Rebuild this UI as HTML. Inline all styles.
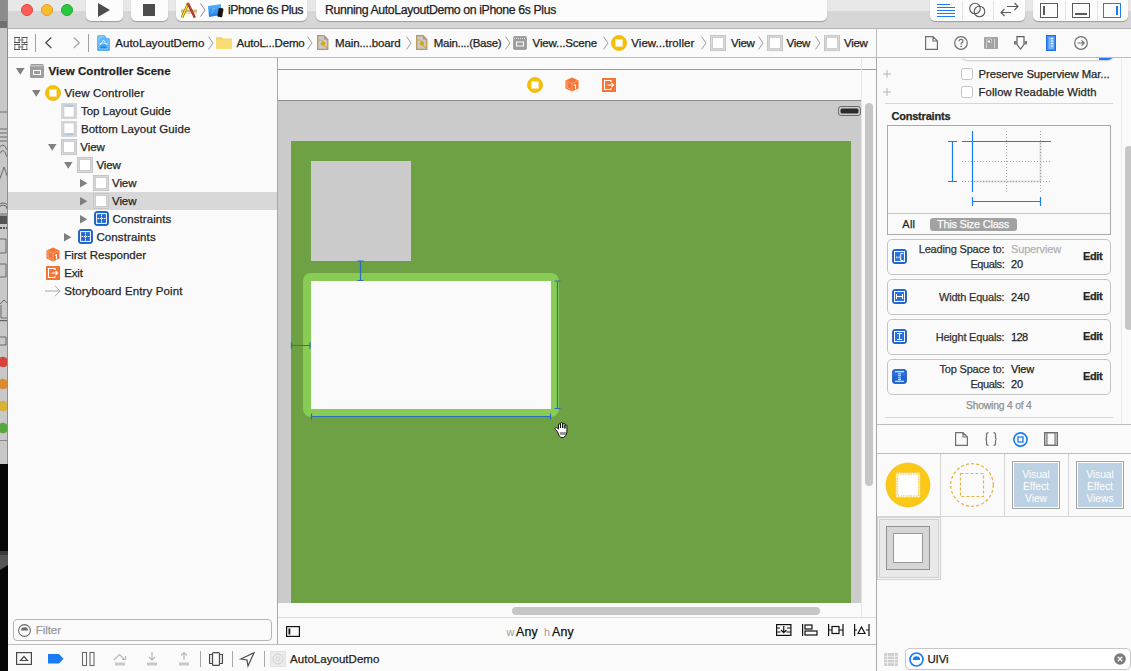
<!DOCTYPE html>
<html><head><meta charset="utf-8">
<style>
*{margin:0;padding:0;box-sizing:border-box}
html,body{width:1131px;height:671px;overflow:hidden;background:#fafafa;font-family:"Liberation Sans",sans-serif;color:#262626}
.a{position:absolute}
.t{position:absolute;white-space:nowrap;line-height:1;-webkit-text-stroke:0.25px currentColor}
svg{position:absolute;overflow:visible}
</style></head><body>
<div class="a" style="left:0px;top:0px;width:8px;height:21px;background:#8c8c8c;"></div>
<div class="a" style="left:0px;top:21px;width:8px;height:7px;background:#6f6f6f;"></div>
<div class="a" style="left:0px;top:28px;width:8px;height:436px;background:#c8c8c8;"></div>
<div class="a" style="left:0px;top:464px;width:8px;height:207px;background:#070707;"></div>
<svg style="left:0px;top:551px;" width="8" height="19" viewBox="0 0 8 19"><path d="M0 0 H8 V14 L0 19 Z" fill="#555"/><path d="M0 0 H8 V4 H0 Z" fill="#3a3a3a"/></svg>
<div class="a" style="left:0;top:0;width:7px;height:464px;overflow:hidden"><svg style="left:0px;top:0px;" width="7" height="464" viewBox="0 0 7 464"><g fill="none" stroke="#6a6a6a" stroke-width="1">
  <path d="M-2 112 H7 M-2 150 Q3 140 7 150" />
  <path d="M0 129 H7 M0 133 H7 M0 137 H7 M0 141 H7"/>
  <path d="M-2 157 Q3 144 7 157"/>
  <path d="M-1 181 L4 167 L9 181"/>
  <path d="M-3 209 A6 6 0 0 1 9 209 M-1 209 A4 4 0 0 1 7 209"/>
  <path d="M0 239 H6 V253 H0 M0 264 H6 V277 H0"/>
  <path d="M-1 305 L4 300 L9 305 M1 305 V318 H7"/><path d="M-1 337 H6 V345 H-1"/>
  </g>
  <rect x="0" y="213" width="7" height="3" fill="#9a9a9a"/><rect x="0" y="216" width="7" height="8" fill="#555"/><path d="M0 228 H7" stroke="#555" stroke-width="2" stroke-dasharray="2 1"/>
  <rect x="0" y="320" width="7" height="1.2" fill="#666"/>
  <circle cx="3" cy="362" r="5.2" fill="#d6433b"/><circle cx="3" cy="384" r="5.2" fill="#dd8a2f"/>
  <circle cx="3" cy="406" r="5.2" fill="#d8b231"/><circle cx="3" cy="428" r="5.2" fill="#56a63c"/>
  <rect x="0" y="440" width="7" height="1" fill="#8a8a8a"/></svg>
</div><div class="a" style="left:7px;top:0px;width:1px;height:464px;background:#8e8e8e;"></div>
<div class="a" style="left:8px;top:0px;width:1123px;height:11px;background:#e8e8e8;"></div>
<div class="a" style="left:8px;top:11px;width:1123px;height:17px;background:#d6d6d6;"></div>
<div class="a" style="left:8px;top:28px;width:1123px;height:1px;background:#b3b3b3;"></div>
<div class="a" style="left:21px;top:4px;width:12px;height:12px;background:#fd5f57;border-radius:50%;border:0.5px solid #e3463f"></div>
<div class="a" style="left:41px;top:4px;width:12px;height:12px;background:#fbbd2e;border-radius:50%;border:0.5px solid #dfa123"></div>
<div class="a" style="left:61px;top:4px;width:12px;height:12px;background:#28c83f;border-radius:50%;border:0.5px solid #1dad2b"></div>
<div class="a" style="left:86px;top:-5px;width:37px;height:26px;background:#fcfcfc;border-radius:5px;box-shadow:0 0.5px 1px rgba(0,0,0,.28)"></div>
<svg style="left:98px;top:3px;" width="13" height="15" viewBox="0 0 13 15"><path d="M0 0 L12 7 L0 14 Z" fill="#4d4d4d"/></svg>
<div class="a" style="left:131px;top:-5px;width:37px;height:26px;background:#fcfcfc;border-radius:5px;box-shadow:0 0.5px 1px rgba(0,0,0,.28)"></div>
<div class="a" style="left:143px;top:4px;width:12px;height:12px;background:#4d4d4d;"></div>
<div class="a" style="left:176px;top:-5px;width:131px;height:26px;background:#fcfcfc;border-radius:5px;box-shadow:0 0.5px 1px rgba(0,0,0,.28)"></div>
<svg style="left:181px;top:2px;" width="17" height="16" viewBox="0 0 17 16"><rect x="0" y="7.5" width="16" height="2.5" fill="#e4b07a"/><rect x="0" y="10" width="16" height="2" fill="#f1d6b4"/><path d="M7.2 1.5 L1 15.5" stroke="#8a6a00" stroke-width="2.6"/><path d="M7.2 1.5 L1 15.5" stroke="#f3dc1a" stroke-width="1.5"/><path d="M7 1.5 L13.8 15.5" stroke="#7a2a1a" stroke-width="2.3"/><path d="M7 1.5 L13.8 15.5" stroke="#c9432e" stroke-width="1.3"/><circle cx="7" cy="2" r="1.4" fill="#d04a3a"/></svg>
<svg style="left:200px;top:3px;" width="6" height="15" viewBox="0 0 6 15"><path d="M0.5 0.5 L5 7 L0.5 13.5" fill="none" stroke="#8c8c8c" stroke-width="1"/></svg>
<svg style="left:208px;top:4px;" width="16" height="14" viewBox="0 0 16 14"><defs><linearGradient id="sg" x1="0" y1="0" x2="0" y2="1"><stop offset="0" stop-color="#5ab4ff"/><stop offset="1" stop-color="#1f7ee6"/></linearGradient></defs><path d="M0 2 L13 0 L13 11 L1 13 Z" fill="url(#sg)"/><path d="M4 6 L7 4 M3 9 L6 7" stroke="#9fd2ff" stroke-width="0.6"/><rect x="10" y="4" width="5" height="9" rx="1.2" fill="#161616" transform="rotate(10 12 8)"/></svg>
<div class="t" style="left:228.00px;top:4.00px;font-size:12.3px;color:#1e1e1e;letter-spacing:-0.504px">iPhone 6s Plus</div>
<div class="a" style="left:316px;top:-5px;width:511px;height:26px;background:#fcfcfc;border-radius:5px;box-shadow:0 0.5px 1px rgba(0,0,0,.28)"></div>
<div class="t" style="left:325.00px;top:4.00px;font-size:12.3px;color:#1e1e1e;letter-spacing:-0.379px">Running AutoLayoutDemo on iPhone 6s Plus</div>
<div class="a" style="left:930px;top:-5px;width:95px;height:26px;background:#fcfcfc;border-radius:5px;box-shadow:0 0.5px 1px rgba(0,0,0,.28)"></div>
<div class="a" style="left:962px;top:1px;width:1px;height:19px;background:#e2e2e2;"></div>
<div class="a" style="left:993px;top:1px;width:1px;height:19px;background:#e2e2e2;"></div>
<div class="a" style="left:1033px;top:-5px;width:95px;height:26px;background:#fcfcfc;border-radius:5px;box-shadow:0 0.5px 1px rgba(0,0,0,.28)"></div>
<div class="a" style="left:1065px;top:1px;width:1px;height:19px;background:#e2e2e2;"></div>
<div class="a" style="left:1097px;top:1px;width:1px;height:19px;background:#e2e2e2;"></div>
<svg style="left:937px;top:4px;" width="19" height="14" viewBox="0 0 19 14"><g stroke="#1b7cf5" stroke-width="1.2"><path d="M0 0.5H13M0 3.5H18M0 6.5H18M0 9.5H18M0 12.5H18"/></g></svg>
<svg style="left:969px;top:2px;" width="18" height="16" viewBox="0 0 18 16"><g fill="none" stroke="#5a5a5a" stroke-width="1.1"><circle cx="6" cy="6.5" r="5.3"/><circle cx="10.5" cy="9.5" r="5.3"/></g></svg>
<svg style="left:1000px;top:3px;" width="20" height="14" viewBox="0 0 20 14"><g fill="none" stroke="#5a5a5a" stroke-width="1.1"><path d="M1 9.5H11M4.5 6 L1 9.5 L4.5 13"/><path d="M7 3.5H18M14.5 0 L18 3.5 L14.5 7"/></g></svg>
<svg style="left:1040px;top:3px;" width="18" height="15" viewBox="0 0 18 15"><rect x="0.5" y="0.5" width="17" height="14" fill="none" stroke="#5a5a5a"/><rect x="3" y="3" width="2" height="9" fill="#5a5a5a"/></svg>
<svg style="left:1072px;top:3px;" width="18" height="15" viewBox="0 0 18 15"><rect x="0.5" y="0.5" width="17" height="14" fill="none" stroke="#5a5a5a"/><rect x="3" y="10" width="12" height="2" fill="#5a5a5a"/></svg>
<svg style="left:1103px;top:3px;" width="18" height="15" viewBox="0 0 18 15"><rect x="0.5" y="0.5" width="17" height="14" fill="none" stroke="#1b7cf5"/><rect x="13" y="3" width="2" height="9" fill="#1b7cf5"/></svg>
<div class="a" style="left:8px;top:29px;width:1123px;height:28px;background:#fafafa;"></div>
<div class="a" style="left:8px;top:57px;width:1123px;height:1px;background:#bdbdbd;"></div>
<div class="a" style="left:876px;top:29px;width:1px;height:28px;background:#bdbdbd;"></div>
<svg style="left:14px;top:37px;" width="14" height="13" viewBox="0 0 14 13"><rect x="0" y="0" width="6" height="6" fill="#fff"/><rect x="0" y="0" width="1.6" height="6" fill="#ababab"/><rect x="4.4" y="0" width="1.6" height="6" fill="#ababab"/><path d="M0 0.5 H6 M0 5.5 H6" stroke="#555" stroke-width="1"/><rect x="7.5" y="0" width="6" height="6" fill="#fff"/><rect x="7.5" y="0" width="1.6" height="6" fill="#ababab"/><rect x="11.9" y="0" width="1.6" height="6" fill="#ababab"/><path d="M7.5 0.5 H13.5 M7.5 5.5 H13.5" stroke="#555" stroke-width="1"/><rect x="0" y="7" width="6" height="6" fill="#fff"/><rect x="0" y="7" width="1.6" height="6" fill="#ababab"/><rect x="4.4" y="7" width="1.6" height="6" fill="#ababab"/><path d="M0 7.5 H6 M0 12.5 H6" stroke="#555" stroke-width="1"/><rect x="7.5" y="7" width="6" height="6" fill="#fff"/><rect x="7.5" y="7" width="1.6" height="6" fill="#ababab"/><rect x="11.9" y="7" width="1.6" height="6" fill="#ababab"/><path d="M7.5 7.5 H13.5 M7.5 12.5 H13.5" stroke="#555" stroke-width="1"/><path d="M4 3 H9.5 M4 10 H9.5" stroke="#666" stroke-width="1"/><path d="M10.5 5.8 V7.5" stroke="#888" stroke-width="0.8"/></svg>
<div class="a" style="left:35px;top:34px;width:1px;height:18px;background:#a0a0a0;"></div>
<svg style="left:45px;top:37px;" width="7" height="12" viewBox="0 0 7 12"><path d="M6.3 0.5 L0.8 5.75 L6.3 11" fill="none" stroke="#4a4a4a" stroke-width="1.3"/></svg>
<svg style="left:73px;top:37px;" width="7" height="12" viewBox="0 0 7 12"><path d="M0.7 0.5 L6.2 5.75 L0.7 11" fill="none" stroke="#a6a6a6" stroke-width="1.3"/></svg>
<div class="a" style="left:88px;top:34px;width:1px;height:18px;background:#a0a0a0;"></div>
<svg style="left:97px;top:35px;" width="13" height="16" viewBox="0 0 13 16"><defs><linearGradient id="pg" x1="0" y1="0" x2="0" y2="1"><stop offset="0" stop-color="#6cc0f7"/><stop offset="1" stop-color="#3a9cf0"/></linearGradient></defs><path d="M0.5 1.5 Q0.5 0.5 1.5 0.5 H7.5 L9.5 3.5 H11.5 Q12.5 3.5 12.5 4.5 V15 Q12.5 15.5 12 15.5 H1 Q0.5 15.5 0.5 15 Z" fill="url(#pg)" stroke="#59aef0" stroke-width="0.8"/><path d="M2 14 V2 H7 M2 14 H11 V5" fill="none" stroke="#b5e0ff" stroke-width="0.6"/><path d="M2.5 13 Q6.5 9.5 10.5 13 Z" fill="#1f86ee"/><path d="M3 10 L6.5 5 L10 10 M2.5 9 Q6.5 7 10.5 9" fill="none" stroke="#e8f6ff" stroke-width="0.9"/></svg>
<div class="t" style="left:115.30px;top:38.00px;font-size:11.5px;color:#222;letter-spacing:0.010px">AutoLayoutDemo</div>
<svg style="left:208px;top:36px;" width="6" height="14" viewBox="0 0 6 14"><path d="M0.5 0.5 L5 7 L0.5 13.5" fill="none" stroke="#a0a0a0" stroke-width="1"/></svg>
<svg style="left:216px;top:37px;" width="16" height="12" viewBox="0 0 16 12"><path d="M0 1 Q0 0 1 0 H5.5 L7 1.5 H15 Q16 1.5 16 2.5 V11 Q16 12 15 12 H1 Q0 12 0 11 Z" fill="#f6d66a"/><rect x="0" y="3" width="16" height="9" rx="1" fill="#f9dc74"/></svg>
<div class="t" style="left:236.50px;top:38.00px;font-size:11.5px;color:#222;letter-spacing:-0.193px">AutoL...Demo</div>
<svg style="left:307px;top:36px;" width="6" height="14" viewBox="0 0 6 14"><path d="M0.5 0.5 L5 7 L0.5 13.5" fill="none" stroke="#a0a0a0" stroke-width="1"/></svg>
<svg style="left:317px;top:35px;" width="12" height="16" viewBox="0 0 12 16"><path d="M0.7 0.7 H7 L10.8 4.5 V14.3 H0.7 Z" fill="#c9c9c9" stroke="#b7975a" stroke-width="1.3"/><path d="M7 0.7 L10.8 4.5 H7 Z" fill="#9a9a9a"/><path d="M1 5 H4.5 L6 7" fill="none" stroke="#c9a24a" stroke-width="0.8"/><circle cx="6" cy="8.5" r="2.2" fill="#d9a514"/><path d="M7 11 L10 12.5" stroke="#d9a514" stroke-width="1"/></svg>
<div class="t" style="left:335.00px;top:38.00px;font-size:11.5px;color:#222;letter-spacing:-0.125px">Main....board</div>
<svg style="left:406px;top:36px;" width="6" height="14" viewBox="0 0 6 14"><path d="M0.5 0.5 L5 7 L0.5 13.5" fill="none" stroke="#a0a0a0" stroke-width="1"/></svg>
<svg style="left:416px;top:35px;" width="12" height="16" viewBox="0 0 12 16"><path d="M0.7 0.7 H7 L10.8 4.5 V14.3 H0.7 Z" fill="#c9c9c9" stroke="#b7975a" stroke-width="1.3"/><path d="M7 0.7 L10.8 4.5 H7 Z" fill="#9a9a9a"/><path d="M1 5 H4.5 L6 7" fill="none" stroke="#c9a24a" stroke-width="0.8"/><circle cx="6" cy="8.5" r="2.2" fill="#d9a514"/><path d="M7 11 L10 12.5" stroke="#d9a514" stroke-width="1"/></svg>
<div class="t" style="left:433.80px;top:38.00px;font-size:11.5px;color:#222;letter-spacing:-0.291px">Main....(Base)</div>
<svg style="left:505px;top:36px;" width="6" height="14" viewBox="0 0 6 14"><path d="M0.5 0.5 L5 7 L0.5 13.5" fill="none" stroke="#a0a0a0" stroke-width="1"/></svg>
<svg style="left:513px;top:36px;" width="14" height="14" viewBox="0 0 14 14"><rect x="0.5" y="0.5" width="13" height="13" rx="1.2" fill="#9c9c9c" stroke="#8a8a8a" stroke-width="0.6"/><path d="M1 2.5 H13" stroke="#dcdcdc" stroke-width="1.2" stroke-dasharray="1 1"/><rect x="3.5" y="6" width="7" height="4" fill="none" stroke="#fff" stroke-width="1"/></svg>
<div class="t" style="left:532.60px;top:38.00px;font-size:11.5px;color:#222;letter-spacing:-0.148px">View...Scene</div>
<svg style="left:603px;top:36px;" width="6" height="14" viewBox="0 0 6 14"><path d="M0.5 0.5 L5 7 L0.5 13.5" fill="none" stroke="#a0a0a0" stroke-width="1"/></svg>
<svg style="left:611px;top:35px;" width="16" height="16" viewBox="0 0 16 16"><circle cx="8" cy="8" r="7.6" fill="#f6c001" stroke="#e0ad00" stroke-width="0.6"/><rect x="4.3" y="4.3" width="7.4" height="7.4" fill="#fff" stroke="#f3d36a" stroke-width="0.8" stroke-dasharray="1 0.8"/></svg>
<div class="t" style="left:631.30px;top:38.00px;font-size:11.5px;color:#222;letter-spacing:0.041px">View...troller</div>
<svg style="left:701px;top:36px;" width="6" height="14" viewBox="0 0 6 14"><path d="M0.5 0.5 L5 7 L0.5 13.5" fill="none" stroke="#a0a0a0" stroke-width="1"/></svg>
<svg style="left:710px;top:35px;" width="16" height="16" viewBox="0 0 16 16"><rect x="0.5" y="0.5" width="15" height="15" fill="#d9d9d9" stroke="#c6c6c6" stroke-width="1"/><rect x="2.5" y="2.5" width="11" height="11" fill="#fff" stroke="#c4c4c4" stroke-width="0.8"/></svg>
<div class="t" style="left:731.00px;top:38.00px;font-size:11.5px;color:#222;letter-spacing:-0.305px">View</div>
<svg style="left:758px;top:36px;" width="6" height="14" viewBox="0 0 6 14"><path d="M0.5 0.5 L5 7 L0.5 13.5" fill="none" stroke="#a0a0a0" stroke-width="1"/></svg>
<svg style="left:767px;top:35px;" width="16" height="16" viewBox="0 0 16 16"><rect x="0.5" y="0.5" width="15" height="15" fill="#d9d9d9" stroke="#c6c6c6" stroke-width="1"/><rect x="2.5" y="2.5" width="11" height="11" fill="#fff" stroke="#c4c4c4" stroke-width="0.8"/></svg>
<div class="t" style="left:786.60px;top:38.00px;font-size:11.5px;color:#222;letter-spacing:-0.305px">View</div>
<svg style="left:815px;top:36px;" width="6" height="14" viewBox="0 0 6 14"><path d="M0.5 0.5 L5 7 L0.5 13.5" fill="none" stroke="#a0a0a0" stroke-width="1"/></svg>
<svg style="left:824px;top:35px;" width="16" height="16" viewBox="0 0 16 16"><rect x="0.5" y="0.5" width="15" height="15" fill="#d9d9d9" stroke="#c6c6c6" stroke-width="1"/><rect x="2.5" y="2.5" width="11" height="11" fill="#fff" stroke="#c4c4c4" stroke-width="0.8"/></svg>
<div class="t" style="left:844.00px;top:38.00px;font-size:11.5px;color:#222;letter-spacing:-0.305px">View</div>
<div class="a" style="left:277px;top:58px;width:1px;height:586px;background:#a8a8a8;"></div>
<div class="a" style="left:8px;top:192px;width:269px;height:18px;background:#d8d8d8;"></div>
<svg style="left:15.5px;top:68px;" width="9" height="7" viewBox="0 0 9 7"><path d="M0 0 H8.5 L4.25 6.8 Z" fill="#808080"/></svg>
<svg style="left:30px;top:64px;" width="14" height="14" viewBox="0 0 14 14"><rect x="0" y="0" width="14" height="14" rx="1.5" fill="#9d9d9d"/><path d="M0.5 1.5 H13.5" stroke="#e0e0e0" stroke-width="1" stroke-dasharray="1 1"/><path d="M0.5 2.5 H13.5" stroke="#c8c8c8" stroke-width="1" stroke-dasharray="1 1" stroke-dashoffset="1"/><rect x="3.5" y="6.5" width="7" height="4" fill="none" stroke="#fff" stroke-width="1"/></svg>
<div class="t" style="left:48.60px;top:66.00px;font-size:11.5px;color:#262626;letter-spacing:0.037px;font-weight:bold">View Controller Scene</div>
<svg style="left:32px;top:90px;" width="9" height="7" viewBox="0 0 9 7"><path d="M0 0 H8.5 L4.25 6.8 Z" fill="#808080"/></svg>
<svg style="left:45px;top:85px;" width="16" height="16" viewBox="0 0 16 16"><circle cx="8" cy="8" r="7.6" fill="#f6c001" stroke="#e0ad00" stroke-width="0.6"/><rect x="4.3" y="4.3" width="7.4" height="7.4" fill="#fff" stroke="#f3d36a" stroke-width="0.8" stroke-dasharray="1 0.8"/></svg>
<div class="t" style="left:64.40px;top:88.00px;font-size:11.5px;color:#262626;letter-spacing:0.149px">View Controller</div>
<svg style="left:61px;top:103px;" width="16" height="16" viewBox="0 0 16 16"><rect x="0" y="0" width="16" height="16" fill="#d5d5d5"/><rect x="3" y="2" width="10" height="12" fill="#fff" stroke="#c9c9c9" stroke-width="0.6"/><path d="M3.5 3 H12.5" stroke="#5b8fd9" stroke-width="0.9"/></svg>
<div class="t" style="left:80.90px;top:106.00px;font-size:11.5px;color:#262626;letter-spacing:-0.009px">Top Layout Guide</div>
<svg style="left:61px;top:121px;" width="16" height="16" viewBox="0 0 16 16"><rect x="0" y="0" width="16" height="16" fill="#d5d5d5"/><rect x="3" y="2" width="10" height="12" fill="#fff" stroke="#c9c9c9" stroke-width="0.6"/><path d="M3.5 13 H12.5" stroke="#5b8fd9" stroke-width="0.9"/></svg>
<div class="t" style="left:80.90px;top:124.00px;font-size:11.5px;color:#262626;letter-spacing:0.077px">Bottom Layout Guide</div>
<svg style="left:47.8px;top:143.5px;" width="9" height="7" viewBox="0 0 9 7"><path d="M0 0 H8.5 L4.25 6.8 Z" fill="#808080"/></svg>
<svg style="left:61px;top:139px;" width="16" height="16" viewBox="0 0 16 16"><rect x="0.5" y="0.5" width="15" height="15" fill="#d9d9d9" stroke="#c6c6c6" stroke-width="1"/><rect x="2.5" y="2.5" width="11" height="11" fill="#fff" stroke="#c4c4c4" stroke-width="0.8"/></svg>
<div class="t" style="left:80.30px;top:142.00px;font-size:11.5px;color:#262626;letter-spacing:-0.080px">View</div>
<svg style="left:63.9px;top:161.5px;" width="9" height="7" viewBox="0 0 9 7"><path d="M0 0 H8.5 L4.25 6.8 Z" fill="#808080"/></svg>
<svg style="left:77px;top:157px;" width="16" height="16" viewBox="0 0 16 16"><rect x="0.5" y="0.5" width="15" height="15" fill="#d9d9d9" stroke="#c6c6c6" stroke-width="1"/><rect x="2.5" y="2.5" width="11" height="11" fill="#fff" stroke="#c4c4c4" stroke-width="0.8"/></svg>
<div class="t" style="left:96.40px;top:160.00px;font-size:11.5px;color:#262626;letter-spacing:-0.080px">View</div>
<svg style="left:80.3px;top:179px;" width="8" height="9" viewBox="0 0 8 9"><path d="M0 0 V8.5 L7.4 4.25 Z" fill="#808080"/></svg>
<svg style="left:93px;top:175px;" width="16" height="16" viewBox="0 0 16 16"><rect x="0.5" y="0.5" width="15" height="15" fill="#d9d9d9" stroke="#c6c6c6" stroke-width="1"/><rect x="2.5" y="2.5" width="11" height="11" fill="#fff" stroke="#c4c4c4" stroke-width="0.8"/></svg>
<div class="t" style="left:112.00px;top:178.00px;font-size:11.5px;color:#262626;letter-spacing:-0.080px">View</div>
<svg style="left:80.3px;top:197px;" width="8" height="9" viewBox="0 0 8 9"><path d="M0 0 V8.5 L7.4 4.25 Z" fill="#808080"/></svg>
<svg style="left:93px;top:193px;" width="16" height="16" viewBox="0 0 16 16"><rect x="0.5" y="0.5" width="15" height="15" fill="#d9d9d9" stroke="#c6c6c6" stroke-width="1"/><rect x="2.5" y="2.5" width="11" height="11" fill="#fff" stroke="#c4c4c4" stroke-width="0.8"/></svg>
<div class="t" style="left:112.00px;top:196.00px;font-size:11.5px;color:#262626;letter-spacing:-0.080px">View</div>
<svg style="left:80.3px;top:215px;" width="8" height="9" viewBox="0 0 8 9"><path d="M0 0 V8.5 L7.4 4.25 Z" fill="#808080"/></svg>
<svg style="left:94px;top:211px;" width="15" height="15" viewBox="0 0 15 15"><rect x="0.5" y="0.5" width="14" height="14" rx="2.5" fill="#1b63cc" stroke="#1558bb" stroke-width="0.8"/><rect x="2.6" y="2.6" width="9.8" height="9.8" fill="#1f6ad6" stroke="#fff" stroke-width="1"/><path d="M7.5 3.5 V11.5 M3.5 7.5 H11.5" stroke="#fff" stroke-width="1" stroke-dasharray="1.5 0.7"/></svg>
<div class="t" style="left:112.40px;top:214.00px;font-size:11.5px;color:#262626;letter-spacing:0.076px">Constraints</div>
<svg style="left:64.4px;top:233px;" width="8" height="9" viewBox="0 0 8 9"><path d="M0 0 V8.5 L7.4 4.25 Z" fill="#808080"/></svg>
<svg style="left:78px;top:229px;" width="15" height="15" viewBox="0 0 15 15"><rect x="0.5" y="0.5" width="14" height="14" rx="2.5" fill="#1b63cc" stroke="#1558bb" stroke-width="0.8"/><rect x="2.6" y="2.6" width="9.8" height="9.8" fill="#1f6ad6" stroke="#fff" stroke-width="1"/><path d="M7.5 3.5 V11.5 M3.5 7.5 H11.5" stroke="#fff" stroke-width="1" stroke-dasharray="1.5 0.7"/></svg>
<div class="t" style="left:96.40px;top:232.00px;font-size:11.5px;color:#262626;letter-spacing:0.112px">Constraints</div>
<svg style="left:46px;top:247px;" width="14" height="15" viewBox="0 0 14 15"><path d="M7 0.5 L13.5 3.5 V11.5 L7 14.5 L0.5 11.5 V3.5 Z" fill="#f47534"/><path d="M0.5 3.5 L7 6.5 L13.5 3.5 M7 6.5 V14.5" fill="none" stroke="#fbb58f" stroke-width="0.7"/><path d="M9 8.5 L10.5 7.8 V12.3" fill="none" stroke="#fff" stroke-width="1.1"/><path d="M2 5.5 V10.5 L5 12" fill="none" stroke="#fbc7a9" stroke-width="0.7"/></svg>
<div class="t" style="left:64.20px;top:250.00px;font-size:11.5px;color:#262626;letter-spacing:-0.001px">First Responder</div>
<svg style="left:46px;top:266px;" width="14" height="14" viewBox="0 0 14 14"><rect x="0" y="0" width="14" height="14" fill="#f47534"/><path d="M9 4 V2.5 H2.5 V11.5 H9 V10" fill="none" stroke="#fff" stroke-width="1.1"/><path d="M5.5 7 H11.5 M9.5 5 L11.5 7 L9.5 9" fill="none" stroke="#fff" stroke-width="1.2"/></svg>
<div class="t" style="left:64.20px;top:268.00px;font-size:11.5px;color:#262626;letter-spacing:-0.143px">Exit</div>
<svg style="left:45px;top:285px;" width="16" height="12" viewBox="0 0 16 12"><path d="M0 6 H15 M10 0.8 L15.2 6 L10 11.2" fill="none" stroke="#a8a8a8" stroke-width="1"/></svg>
<div class="t" style="left:64.20px;top:286.00px;font-size:11.5px;color:#262626;letter-spacing:0.118px">Storyboard Entry Point</div>
<div class="a" style="left:278px;top:69px;width:598px;height:1px;background:#9a9a9a;"></div>
<svg style="left:527px;top:77px;" width="16" height="16" viewBox="0 0 16 16"><circle cx="8" cy="8" r="7.6" fill="#f6c001" stroke="#e0ad00" stroke-width="0.6"/><rect x="4.3" y="4.3" width="7.4" height="7.4" fill="#fff" stroke="#f3d36a" stroke-width="0.8" stroke-dasharray="1 0.8"/></svg>
<svg style="left:565px;top:77px;" width="14" height="15" viewBox="0 0 14 15"><path d="M7 0.5 L13.5 3.5 V11.5 L7 14.5 L0.5 11.5 V3.5 Z" fill="#f47534"/><path d="M0.5 3.5 L7 6.5 L13.5 3.5 M7 6.5 V14.5" fill="none" stroke="#fbb58f" stroke-width="0.7"/><path d="M9 8.5 L10.5 7.8 V12.3" fill="none" stroke="#fff" stroke-width="1.1"/><path d="M2 5.5 V10.5 L5 12" fill="none" stroke="#fbc7a9" stroke-width="0.7"/></svg>
<svg style="left:602px;top:78px;" width="14" height="14" viewBox="0 0 14 14"><rect x="0" y="0" width="14" height="14" fill="#f47534"/><path d="M9 4 V2.5 H2.5 V11.5 H9 V10" fill="none" stroke="#fff" stroke-width="1.1"/><path d="M5.5 7 H11.5 M9.5 5 L11.5 7 L9.5 9" fill="none" stroke="#fff" stroke-width="1.2"/></svg>
<div class="a" style="left:278px;top:100px;width:583px;height:1px;background:#8a8a8a;"></div>
<div class="a" style="left:278px;top:101px;width:583px;height:502px;background:#cbcbcb;"></div>
<svg style="left:838px;top:106px;" width="23" height="10" viewBox="0 0 23 10"><rect x="0.5" y="0.5" width="22" height="9" rx="2.5" fill="#cbcbcb" stroke="#6a6a6a" stroke-width="1"/><rect x="2.5" y="2.5" width="18" height="5" rx="1.5" fill="#2b2b2b"/></svg>
<div class="a" style="left:291px;top:141px;width:560px;height:462px;background:#6ea044;"></div>
<div class="a" style="left:311px;top:161px;width:100px;height:100px;background:#cbcbcb;"></div>
<div class="a" style="left:303px;top:273px;width:256px;height:144px;background:#88cc56;border-radius:8px"></div>
<div class="a" style="left:311px;top:281px;width:240px;height:128px;background:#fafafa;"></div>
<svg style="left:356px;top:260px;" width="9" height="22" viewBox="0 0 9 22"><path d="M4.5 1 V20.5 M1.5 1 H7.5 M1.5 20.5 H7.5" stroke="#2a6dbd" stroke-width="1.2" fill="none"/></svg>
<svg style="left:290px;top:341px;" width="22" height="9" viewBox="0 0 22 9"><path d="M1.5 4.5 H20 M1.5 1.2 V7.8 M20 1.2 V7.8" stroke="#2a6dbd" stroke-width="1.2" fill="none"/></svg>
<svg style="left:553px;top:280px;" width="9" height="130" viewBox="0 0 9 130"><path d="M4.5 1 V128.5 M1.5 1 H7.5 M1.5 128.5 H7.5" stroke="#2a6dbd" stroke-width="1.2" fill="none"/></svg>
<svg style="left:310px;top:412px;" width="243" height="9" viewBox="0 0 243 9"><path d="M1.5 4.5 H240.5 M1.5 1.5 V7.5 M240.5 1.5 V7.5" stroke="#2a6dbd" stroke-width="1.2" fill="none"/></svg>
<svg style="left:554px;top:422px;" width="17" height="17" viewBox="0 0 17 17"><path d="M3.5 9.5 L1.5 7.5 Q0.5 6.5 1.5 5.8 Q2.5 5.2 3.5 6.2 L4.5 7.2 V3 Q4.5 1.8 5.5 1.8 Q6.5 1.8 6.5 3 V6 V1.8 Q6.5 0.6 7.6 0.6 Q8.7 0.6 8.7 1.8 V6 V2.4 Q8.7 1.3 9.8 1.3 Q10.9 1.3 10.9 2.4 V6.5 V3.8 Q10.9 2.8 11.9 2.8 Q12.9 2.8 12.9 3.8 V10 Q12.9 14 9.5 15.5 H7 Q5 15 3.5 9.5 Z" fill="#fff" stroke="#000" stroke-width="0.9"/><path d="M7 10 V13 M9 10 V13 M11 10 V13" stroke="#000" stroke-width="0.8"/></svg>
<div class="a" style="left:861px;top:58px;width:1px;height:545px;background:#e6e6e6;"></div>
<div class="a" style="left:865px;top:103px;width:8px;height:383px;background:#c6c6c6;border-radius:4px"></div>
<div class="a" style="left:512px;top:607px;width:308px;height:8px;background:#c6c6c6;border-radius:4px"></div>
<div class="a" style="left:861px;top:603px;width:1px;height:14px;background:#e6e6e6;"></div>
<div class="a" style="left:278px;top:617px;width:598px;height:1px;background:#dcdcdc;"></div>
<svg style="left:286px;top:626px;" width="14" height="11" viewBox="0 0 14 11"><rect x="0.6" y="0.6" width="12.8" height="9.8" fill="none" stroke="#111" stroke-width="1.2"/><rect x="2.5" y="2.5" width="1.8" height="6" fill="#111"/></svg>
<div class="t" style="left:506.40px;top:627.00px;font-size:10.8px;color:#9a9a9a;-webkit-text-stroke:0">w</div>
<div class="t" style="left:516.00px;top:626.00px;font-size:12.3px;color:#111;letter-spacing:0.268px">Any</div>
<div class="t" style="left:544.00px;top:627.00px;font-size:10.8px;color:#9a9a9a;-webkit-text-stroke:0">h</div>
<div class="t" style="left:552.00px;top:626.00px;font-size:12.3px;color:#111;letter-spacing:0.268px">Any</div>
<svg style="left:776px;top:624px;" width="16" height="12" viewBox="0 0 16 12"><rect x="0.6" y="0.6" width="14.3" height="10.8" stroke="#111" stroke-width="1.2" fill="none"/><path d="M0.6 4 H4 M11 4 H14.9 M0.6 8 H4.5 M10.5 8 H14.9 M7.75 2 V8.5 M5 6 L7.75 8.7 L10.5 6" stroke="#111" stroke-width="1.2" fill="none"/></svg>
<svg style="left:802px;top:624px;" width="16" height="12" viewBox="0 0 16 12"><path d="M0.6 0 V12" stroke="#111" stroke-width="1.2" fill="none"/><rect x="3" y="1" width="7" height="4" stroke="#111" stroke-width="1.2" fill="none"/><rect x="3" y="7" width="12" height="4" stroke="#111" stroke-width="1.2" fill="none"/></svg>
<svg style="left:828px;top:624px;" width="16" height="12" viewBox="0 0 16 12"><path d="M0.6 0 V12 M15 0 V12 M0.6 6 H4 M11 6 H15" stroke="#111" stroke-width="1.2" fill="none"/><rect x="4" y="2.5" width="7" height="7" stroke="#111" stroke-width="1.2" fill="none"/></svg>
<svg style="left:854px;top:624px;" width="16" height="12" viewBox="0 0 16 12"><path d="M0.6 0 V12 M15 0 V12 M0.6 6 H3 M12 6 H15" stroke="#111" stroke-width="1.2" fill="none"/><path d="M4 9.5 L7.5 3 L11 9.5 Z" stroke="#111" stroke-width="1.2" fill="none"/></svg>
<div class="a" style="left:876px;top:58px;width:1px;height:613px;background:#a8a8a8;"></div>
<svg style="left:925px;top:36px;" width="13" height="14" viewBox="0 0 13 14"><path d="M0.6 0.6 H8 L12.4 5 V13.4 H0.6 Z M8 0.6 V5 H12.4" stroke="#6e6e6e" stroke-width="1.2" fill="none"/></svg>
<svg style="left:954px;top:36px;" width="14" height="14" viewBox="0 0 14 14"><circle cx="7" cy="7" r="6.3" stroke="#6e6e6e" stroke-width="1.2" fill="none"/><path d="M5 5.3 Q5 3.3 7 3.3 Q9 3.3 9 5.1 Q9 6.3 7.2 7.2 V8.4" stroke="#6e6e6e" stroke-width="1.2" fill="none"/><circle cx="7.2" cy="10.4" r="0.8" fill="#6e6e6e"/></svg>
<svg style="left:984px;top:37px;" width="14" height="12" viewBox="0 0 14 12"><rect x="0" y="0" width="14" height="12" rx="1" fill="#a3a3a3"/><path d="M2.5 11 V2 H7.5 V5.5 H5 M10.5 2 V11" fill="none" stroke="#d9d9d9" stroke-width="0.9"/><circle cx="4.8" cy="4.5" r="1.3" fill="#fff"/><circle cx="4.8" cy="4.5" r="2" fill="none" stroke="#6a6a6a" stroke-width="0.7" stroke-dasharray="1 1"/></svg>
<svg style="left:1013px;top:36px;" width="15" height="14" viewBox="0 0 15 14"><path d="M4 0.6 H11 V8.5 L7.5 13 L4 8.5 Z" fill="#fff" stroke="#5e5e5e" stroke-width="1.2"/><rect x="1" y="5" width="2.6" height="3.5" fill="#7a7a7a"/><rect x="11.4" y="5" width="2.6" height="3.5" fill="#7a7a7a"/></svg>
<svg style="left:1046px;top:35px;" width="10" height="16" viewBox="0 0 10 16"><rect x="0.5" y="0.5" width="9" height="15" fill="#3d8ef5" stroke="#1b6fe8" stroke-width="1"/><rect x="2.5" y="2" width="5" height="12" fill="#7fb5ff"/><path d="M5 3.5 H7.5 M5 6 H7.5 M5 8.5 H7.5 M5 11 H7.5" stroke="#fff" stroke-width="0.9"/></svg>
<svg style="left:1074px;top:36px;" width="14" height="14" viewBox="0 0 14 14"><circle cx="7" cy="7" r="6.3" stroke="#6e6e6e" stroke-width="1.2" fill="none"/><path d="M3.5 7 H10 M7.5 4.3 L10.2 7 L7.5 9.7" stroke="#6e6e6e" stroke-width="1.2" fill="none"/></svg>
<div class="a" style="left:950px;top:58px;width:175px;height:10px;overflow:hidden"><div class="a" style="left:12px;top:-8px;width:151px;height:10px;background:#fff;border-radius:0 0 5px 5px;box-shadow:0 0.5px 1.5px rgba(0,0,0,.35)"></div>
<div class="a" style="left:149px;top:-8px;width:14px;height:10px;background:#1b7cf5;border-radius:0 0 5px 0"></div>
</div><div class="a" style="left:877px;top:58px;width:254px;height:0px;background:#fafafa;"></div>
<div class="a" style="left:1121px;top:58px;width:1px;height:366px;background:#ececec;"></div>
<div class="a" style="left:1125px;top:146px;width:8px;height:184px;background:#c6c6c6;border-radius:4px"></div>
<svg style="left:883px;top:69.5px;" width="8" height="8" viewBox="0 0 8 8"><path d="M4 0 V8 M0 4 H8" stroke="#b0b0b0" stroke-width="0.9"/></svg>
<svg style="left:883px;top:87.5px;" width="8" height="8" viewBox="0 0 8 8"><path d="M4 0 V8 M0 4 H8" stroke="#b0b0b0" stroke-width="0.9"/></svg>
<div class="a" style="left:961px;top:68px;width:12px;height:12px;background:#fff;border:1px solid #c3c3c3;border-radius:2.5px"></div>
<div class="a" style="left:961px;top:86px;width:12px;height:12px;background:#fff;border:1px solid #c3c3c3;border-radius:2.5px"></div>
<div class="t" style="left:978.60px;top:69.00px;font-size:11.3px;color:#262626;letter-spacing:-0.060px">Preserve Superview Mar...</div>
<div class="t" style="left:978.60px;top:87.00px;font-size:11.3px;color:#262626;letter-spacing:0.086px">Follow Readable Width</div>
<div class="a" style="left:885px;top:103px;width:228px;height:1px;background:#d6d6d6;"></div>
<div class="t" style="left:891.40px;top:111.00px;font-size:11px;color:#262626;letter-spacing:-0.193px;font-weight:bold">Constraints</div>
<div class="a" style="left:887px;top:125px;width:224px;height:110px;background:#fafafa;border:1px solid #a9a9a9"></div>
<div class="a" style="left:888px;top:213px;width:222px;height:1px;background:#c8c8c8;"></div>
<svg style="left:950px;top:128px;" width="105" height="80" viewBox="0 0 105 80">

<path d="M22 53.5 H90.5 M90.5 13 V53.5" stroke="#dedede" stroke-width="2"/>
<path d="M12 33.5 H101 M12 53.5 H101 M56.5 3 V64 M90.5 3 V64" stroke="#a5a5a5" stroke-width="1" stroke-dasharray="1 2"/>
<path d="M22.5 3 V64 M12 13.5 H101" stroke="#1a7cf4" stroke-width="1.2"/>
<path d="M2.5 13.5 V53.5 M-2 13.5 H7 M-2 53.5 H7" stroke="#1a7cf4" stroke-width="1.2"/>
<path d="M22.5 73.5 H90.5 M22.5 69 V78 M90.5 69 V78" stroke="#1a7cf4" stroke-width="1.2"/>
</svg>
<div class="t" style="left:902.30px;top:219.00px;font-size:11px;color:#262626;letter-spacing:0.258px">All</div>
<div class="a" style="left:930px;top:217.5px;width:86.5px;height:13.5px;background:#a2a2a2;border-radius:3px"></div>
<div class="t" style="left:937.00px;top:219.00px;font-size:11px;color:#fafafa;letter-spacing:-0.253px">This Size Class</div>
<div class="a" style="left:887px;top:239px;width:224px;height:36px;background:#fafafa;border:1px solid #c4c4c4;border-radius:5px"></div>
<div class="a" style="left:887px;top:279px;width:224px;height:36px;background:#fafafa;border:1px solid #c4c4c4;border-radius:5px"></div>
<div class="a" style="left:887px;top:319px;width:224px;height:36px;background:#fafafa;border:1px solid #c4c4c4;border-radius:5px"></div>
<div class="a" style="left:887px;top:359px;width:224px;height:36px;background:#fafafa;border:1px solid #c4c4c4;border-radius:5px"></div>
<svg style="left:892px;top:249px;" width="15" height="15" viewBox="0 0 15 15"><rect x="0.5" y="0.5" width="14" height="14" rx="2.5" fill="#1b62cc" stroke="#1556bb" stroke-width="0.8"/><rect x="2.5" y="2.5" width="10" height="10" fill="#2b70dc" stroke="#fff" stroke-width="1"/><path d="M4.8 7.4 V9.4 M7 7.4 V9.4" stroke="#fff" stroke-width="1"/><path d="M11.5 4.6 H8.7 V11.4 H11.5" fill="none" stroke="#fff" stroke-width="1"/></svg>
<svg style="left:892px;top:289px;" width="15" height="15" viewBox="0 0 15 15"><rect x="0.5" y="0.5" width="14" height="14" rx="2.5" fill="#1b62cc" stroke="#1556bb" stroke-width="0.8"/><rect x="2.5" y="2.5" width="10" height="10" fill="#2b70dc" stroke="#fff" stroke-width="1"/><path d="M4.5 5 V10 M10.5 5 V10 M4.5 7.5 H10.5" fill="none" stroke="#fff" stroke-width="1.1"/></svg>
<svg style="left:892px;top:329px;" width="15" height="15" viewBox="0 0 15 15"><rect x="0.5" y="0.5" width="14" height="14" rx="2.5" fill="#1b62cc" stroke="#1556bb" stroke-width="0.8"/><rect x="2.5" y="2.5" width="10" height="10" fill="#2b70dc" stroke="#fff" stroke-width="1"/><path d="M5 4.5 H10 M5 10.5 H10 M7.5 4.5 V10.5" fill="none" stroke="#fff" stroke-width="1.1"/></svg>
<svg style="left:892px;top:369px;" width="15" height="15" viewBox="0 0 15 15"><rect x="0.5" y="0.5" width="14" height="14" rx="2.5" fill="#2a6fd8" stroke="#1556bb" stroke-width="0.8"/><rect x="1" y="7" width="13" height="7" rx="2" fill="#1f63cc"/><path d="M3 2.8 H12 M3 12.2 H12" stroke="#fff" stroke-width="1.1"/><path d="M6 4.8 H9 M6 6.8 H9 M6 8.8 H9 M6 10.6 H9" stroke="#fff" stroke-width="0.9"/></svg>
<div class="t" style="left:918.70px;top:244.00px;font-size:11px;color:#333333;letter-spacing:-0.175px">Leading Space to:</div>
<div class="t" style="left:1011.00px;top:244.00px;font-size:11px;color:#b3b3b3;letter-spacing:-0.151px">Superview</div>
<div class="t" style="left:970.40px;top:259.00px;font-size:11px;color:#333333;letter-spacing:-0.384px">Equals:</div>
<div class="t" style="left:1011.00px;top:259.00px;font-size:11px;color:#1e1e1e;letter-spacing:-0.118px">20</div>
<div class="t" style="left:939.00px;top:292.00px;font-size:11px;color:#333333;letter-spacing:-0.190px">Width Equals:</div>
<div class="t" style="left:1011.00px;top:292.00px;font-size:11px;color:#1e1e1e;letter-spacing:0.116px">240</div>
<div class="t" style="left:935.70px;top:332.00px;font-size:11px;color:#333333;letter-spacing:-0.203px">Height Equals:</div>
<div class="t" style="left:1011.00px;top:332.00px;font-size:11px;color:#1e1e1e;letter-spacing:-0.618px">128</div>
<div class="t" style="left:939.40px;top:364.00px;font-size:11px;color:#333333;letter-spacing:-0.174px">Top Space to:</div>
<div class="t" style="left:1011.00px;top:364.00px;font-size:11px;color:#1e1e1e;letter-spacing:-0.161px">View</div>
<div class="t" style="left:970.40px;top:379.00px;font-size:11px;color:#333333;letter-spacing:-0.384px">Equals:</div>
<div class="t" style="left:1011.00px;top:379.00px;font-size:11px;color:#1e1e1e;letter-spacing:-0.118px">20</div>
<div class="t" style="left:1083.00px;top:251.00px;font-size:11px;color:#262626;letter-spacing:-0.369px;font-weight:bold">Edit</div>
<div class="t" style="left:1083.00px;top:291.00px;font-size:11px;color:#262626;letter-spacing:-0.369px;font-weight:bold">Edit</div>
<div class="t" style="left:1083.00px;top:331.00px;font-size:11px;color:#262626;letter-spacing:-0.369px;font-weight:bold">Edit</div>
<div class="t" style="left:1083.00px;top:371.00px;font-size:11px;color:#262626;letter-spacing:-0.369px;font-weight:bold">Edit</div>
<div class="t" style="left:966.00px;top:401.00px;font-size:10.3px;color:#8e8e8e;letter-spacing:-0.182px">Showing 4 of 4</div>
<div class="a" style="left:885px;top:417px;width:228px;height:1px;background:#d6d6d6;"></div>
<div class="a" style="left:877px;top:424px;width:254px;height:1px;background:#bdbdbd;"></div>
<svg style="left:955px;top:432px;" width="13" height="14" viewBox="0 0 13 14"><path d="M0.6 0.6 H8 L12.4 5 V13.4 H0.6 Z M8 0.6 V5 H12.4" stroke="#6e6e6e" stroke-width="1.2" fill="none"/></svg>
<svg style="left:985px;top:432px;" width="12" height="14" viewBox="0 0 12 14"><path d="M3.5 0.6 Q1.5 0.6 1.5 2.5 V5.5 Q1.5 7 0.3 7 Q1.5 7 1.5 8.5 V11.5 Q1.5 13.4 3.5 13.4 M8.5 0.6 Q10.5 0.6 10.5 2.5 V5.5 Q10.5 7 11.7 7 Q10.5 7 10.5 8.5 V11.5 Q10.5 13.4 8.5 13.4" stroke="#6e6e6e" stroke-width="1.2" fill="none"/></svg>
<svg style="left:1013px;top:432px;" width="15" height="15" viewBox="0 0 15 15"><circle cx="7.5" cy="7.5" r="6.6" fill="none" stroke="#1a7cf4" stroke-width="1.6"/><rect x="5" y="5" width="5" height="5" fill="none" stroke="#1a7cf4" stroke-width="1.3"/></svg>
<svg style="left:1044px;top:432px;" width="14" height="14" viewBox="0 0 14 14"><rect x="0.6" y="0.6" width="12.8" height="12.8" fill="#cfcfcf" stroke="#6e6e6e" stroke-width="1.2"/><rect x="3" y="2" width="8" height="10" fill="#fafafa"/><path d="M3 1 V13 M11 1 V13" stroke="#6e6e6e" stroke-width="1"/></svg>
<div class="a" style="left:877px;top:453px;width:254px;height:1px;background:#bdbdbd;"></div>
<div class="a" style="left:940px;top:454px;width:1px;height:62px;background:#d6d6d6;"></div>
<div class="a" style="left:1004px;top:454px;width:1px;height:62px;background:#d6d6d6;"></div>
<div class="a" style="left:1068px;top:454px;width:1px;height:62px;background:#d6d6d6;"></div>
<div class="a" style="left:877px;top:516px;width:254px;height:1px;background:#d6d6d6;"></div>
<svg style="left:886px;top:463px;" width="44" height="44" viewBox="0 0 44 44"><circle cx="22" cy="22" r="22" fill="#fbc915" stroke="#f0b90a" stroke-width="0.6"/><rect x="10" y="9.5" width="24" height="25" fill="#fff" stroke="#f3d063" stroke-width="1"/><rect x="11.5" y="11" width="21" height="22" fill="#fff" stroke="#f7cf45" stroke-width="1.3" stroke-dasharray="1.4 1.2"/></svg>
<svg style="left:950px;top:463px;" width="44" height="44" viewBox="0 0 44 44"><circle cx="22" cy="22" r="21.3" fill="none" stroke="#e8b441" stroke-width="1.3" stroke-dasharray="3 2.2"/><rect x="10.5" y="10.5" width="23" height="23" fill="none" stroke="#e8b441" stroke-width="1.2" stroke-dasharray="3 2"/></svg>
<div class="a" style="left:1012px;top:461px;width:48px;height:48px;background:#bdd1e5;border:1px solid #a3a3a3;box-shadow:inset 0 0 0 1px #fff"></div>
<div class="t" style="left:1022.20px;top:470.00px;font-size:10.2px;color:#ffffff;-webkit-text-stroke:0">Visual</div>
<div class="t" style="left:1023.05px;top:482.00px;font-size:10.2px;color:#ffffff;-webkit-text-stroke:0">Effect</div>
<div class="t" style="left:1025.04px;top:494.00px;font-size:10.2px;color:#ffffff;-webkit-text-stroke:0">View</div>
<div class="a" style="left:1076px;top:461px;width:48px;height:48px;background:#bdd1e5;border:1px solid #a3a3a3;box-shadow:inset 0 0 0 1px #fff"></div>
<div class="t" style="left:1086.20px;top:470.00px;font-size:10.2px;color:#ffffff;-webkit-text-stroke:0">Visual</div>
<div class="t" style="left:1087.05px;top:482.00px;font-size:10.2px;color:#ffffff;-webkit-text-stroke:0">Effect</div>
<div class="t" style="left:1086.49px;top:494.00px;font-size:10.2px;color:#ffffff;-webkit-text-stroke:0">Views</div>
<div class="a" style="left:877px;top:517px;width:64px;height:63px;background:#e9e9e9;border:1px solid #d2d2d2;box-shadow:inset 0 0 0 1px #f4f4f4, inset 0 0 0 2px #d0d0d0"></div>
<div class="a" style="left:886px;top:526px;width:44px;height:44px;background:#d6d6d6;border:1px solid #8f8f8f"></div>
<div class="a" style="left:893px;top:533px;width:30px;height:30px;background:#fafafa;border:1px solid #9a9a9a"></div>
<svg style="left:884px;top:653px;" width="14" height="13" viewBox="0 0 14 13"><rect x="0" y="0" width="14" height="13" rx="1" fill="#cfcfcf"/><path d="M3.5 0 V13 M10.5 0 V13 M0 3.25 H14 M0 6.5 H14 M0 9.75 H14" stroke="#f5f5f5" stroke-width="0.8"/></svg>
<div class="a" style="left:905px;top:648px;width:226px;height:22px;background:#fff;border:1px solid #c6c6c6;border-radius:5px"></div>
<svg style="left:909px;top:652px;" width="15" height="15" viewBox="0 0 15 15"><circle cx="7.5" cy="7.5" r="6.5" fill="#fff" stroke="#1a7cf4" stroke-width="1.7"/><path d="M3.8 8 A3.7 3.7 0 0 1 11.2 8 Z" fill="#1a7cf4"/></svg>
<div class="t" style="left:927.40px;top:654.00px;font-size:11.5px;color:#1e1e1e;letter-spacing:-0.129px">UIVi</div>
<svg style="left:1114px;top:653px;" width="12" height="12" viewBox="0 0 12 12"><circle cx="6" cy="6" r="5.8" fill="#7a7a7a"/><path d="M3.8 3.8 L8.2 8.2 M8.2 3.8 L3.8 8.2" stroke="#fff" stroke-width="1.3"/></svg>
<div class="a" style="left:8px;top:644px;width:868px;height:1px;background:#bdbdbd;"></div>
<div class="a" style="left:13px;top:619px;width:259px;height:22px;background:#fafafa;border:1px solid #b5b5b5;border-radius:4px"></div>
<svg style="left:18px;top:624px;" width="13" height="13" viewBox="0 0 13 13"><circle cx="6.5" cy="6.5" r="5.9" fill="none" stroke="#6a6a6a" stroke-width="1.1"/><path d="M3 6.5 A3.5 3.3 0 0 1 10 6.5 Z" fill="#6a6a6a"/></svg>
<div class="t" style="left:35.70px;top:625.00px;font-size:11.5px;color:#9a9a9a;letter-spacing:-0.043px">Filter</div>
<svg style="left:16px;top:652px;" width="16" height="13" viewBox="0 0 16 13"><rect x="0.6" y="0.6" width="14.8" height="11.8" stroke="#4a4a4a" stroke-width="1.2" fill="none"/><path d="M4.5 8.5 H11.5 L8 4.5 Z" stroke="#4a4a4a" stroke-width="1.2" fill="none"/></svg>
<svg style="left:48px;top:654px;" width="16" height="10" viewBox="0 0 16 10"><path d="M0 0 H11 L15.5 4.8 L11 9.6 H0 Z" fill="#1a7cf4"/></svg>
<svg style="left:82px;top:652px;" width="13" height="14" viewBox="0 0 13 14"><rect x="0.5" y="0.5" width="4" height="13" fill="none" stroke="#6a6a6a" stroke-width="1.1"/><rect x="8" y="0.5" width="4" height="13" fill="none" stroke="#6a6a6a" stroke-width="1.1"/></svg>
<svg style="left:113px;top:653px;" width="15" height="13" viewBox="0 0 15 13"><path d="M1 7 L6.5 1.5 L11 6 M9 6.5 L12.5 6.5 L12.5 3" stroke="#b8b8b8" stroke-width="1.2" fill="none"/><rect x="2" y="9.5" width="10" height="3" fill="#c8c8c8"/></svg>
<svg style="left:147px;top:652px;" width="10" height="14" viewBox="0 0 10 14"><path d="M5 0 V8 M2 5 L5 8 L8 5" stroke="#b8b8b8" stroke-width="1.2" fill="none"/><rect x="0" y="10.5" width="10" height="3" fill="#c8c8c8"/></svg>
<svg style="left:179px;top:652px;" width="10" height="14" viewBox="0 0 10 14"><path d="M5 8 V0.5 M2 3.5 L5 0.5 L8 3.5" stroke="#b8b8b8" stroke-width="1.2" fill="none"/><rect x="0" y="10.5" width="10" height="3" fill="#c8c8c8"/></svg>
<div class="a" style="left:199.5px;top:650.5px;width:1px;height:16.5px;background:#a8a8a8;"></div>
<svg style="left:209px;top:652px;" width="14" height="14" viewBox="0 0 14 14"><rect x="3.5" y="0.6" width="7" height="12.8" rx="1" stroke="#4a4a4a" stroke-width="1.2" fill="none"/><path d="M3.5 2.5 H0.6 V11.5 H3.5 M10.5 2.5 H13.4 V11.5 H10.5" stroke="#4a4a4a" stroke-width="1.2" fill="none"/></svg>
<div class="a" style="left:231.5px;top:650.5px;width:1px;height:16.5px;background:#a8a8a8;"></div>
<svg style="left:240px;top:652px;" width="15" height="15" viewBox="0 0 15 15"><path d="M0.8 7 L14 0.8 L8 14 L7 8 Z" stroke="#4a4a4a" stroke-width="1.2" fill="none"/></svg>
<div class="a" style="left:263.5px;top:650.5px;width:1px;height:16.5px;background:#a8a8a8;"></div>
<svg style="left:270px;top:651px;" width="16" height="16" viewBox="0 0 16 16"><rect x="0.5" y="0.5" width="15" height="15" fill="#ececec" stroke="#d0d0d0" stroke-width="1" stroke-dasharray="1 1"/><circle cx="8" cy="8" r="5" fill="none" stroke="#cfcfcf" stroke-width="1"/><circle cx="8" cy="8" r="2" fill="none" stroke="#d5d5d5" stroke-width="1"/></svg>
<div class="t" style="left:290.00px;top:654.00px;font-size:11.5px;color:#1e1e1e;letter-spacing:0.038px">AutoLayoutDemo</div>
</body></html>
